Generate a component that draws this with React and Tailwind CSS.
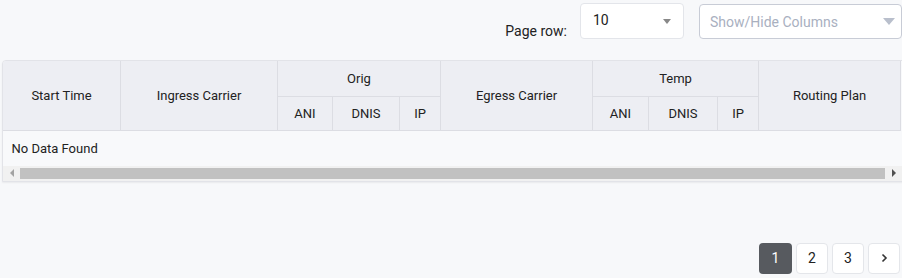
import React from "react";

const cols = [118, 157, 55, 67, 41, 152, 56, 69, 41, 142];

const Th = ({ children, className = "", ...rest }) => (
  <th
    {...rest}
    className={`border border-[#dcdde3] font-normal text-[13px] text-[#222] text-center align-middle ${className}`}
  >
    {children}
  </th>
);

const App = () => {
  return (
    <div className="w-[902px] h-[278px] bg-[#f7f8fa] overflow-hidden font-['Roboto',sans-serif] text-[#222]">
      {/* Top controls */}
      <div className="flex items-start justify-end pt-[3px] h-[57px]">
        <span className="text-[14px] mt-[18px] mr-[13px]">Page row:</span>
        <div className="w-[104px] h-[36px] bg-white border border-[#e3e5ea] rounded-[4px] flex items-center justify-between pl-[12px] pr-[12px]">
          <span className="text-[14px] -mt-[1px]">10</span>
          <span className="w-0 h-0 border-l-[4px] border-r-[4px] border-t-[5px] border-l-transparent border-r-transparent border-t-[#888]" />
        </div>
        <div className="ml-[15px] mt-[1px] w-[203px] h-[35px] bg-white border border-[#c8ccd6] rounded-[4px] flex items-center justify-between pl-[10px] pr-[6px]">
          <span className="text-[14px] text-[#a9b0bf] mt-[2px]">Show/Hide Columns</span>
          <span className="w-0 h-0 border-l-[6px] border-r-[6px] border-t-[7px] border-l-transparent border-r-transparent border-t-[#b9bfcc]" />
        </div>
      </div>

      {/* Table */}
      <div className="ml-[2px] mt-[3px] w-[902px] rounded-tl-[4px] border border-[#e2e3e8] bg-[#f8f9fb] overflow-hidden shadow-[0_1px_2px_rgba(0,0,0,0.06)]">
        <table className="border-collapse table-fixed w-[899px] -m-px">
          <colgroup>
            {cols.map((w, i) => (
              <col key={i} style={{ width: w }} />
            ))}
          </colgroup>
          <thead className="bg-[#edeef3]">
            <tr className="h-[36px]">
              <Th rowSpan={2}>Start Time</Th>
              <Th rowSpan={2}>Ingress Carrier</Th>
              <Th colSpan={3}>Orig</Th>
              <Th rowSpan={2}>Egress Carrier</Th>
              <Th colSpan={3}>Temp</Th>
              <Th rowSpan={2}>Routing Plan</Th>
            </tr>
            <tr className="h-[34px]">
              <Th>ANI</Th>
              <Th>DNIS</Th>
              <Th>IP</Th>
              <Th>ANI</Th>
              <Th>DNIS</Th>
              <Th>IP</Th>
            </tr>
          </thead>
          <tbody>
            <tr className="h-[36px]">
              <td colSpan={10} className="px-[9px] text-[13px] text-[#222]">
                No Data Found
              </td>
            </tr>
          </tbody>
        </table>
        {/* Scrollbar */}
        <div className="h-[15px] bg-[#f1f1f1] flex items-center">
          <div className="w-[17px] flex justify-center">
            <span className="w-0 h-0 border-t-[4px] border-b-[4px] border-r-[4px] border-t-transparent border-b-transparent border-r-[#a3a3a3]" />
          </div>
          <div className="h-[11px] w-[865px] bg-[#c1c1c1]" />
          <div className="w-[17px] flex justify-center">
            <span className="w-0 h-0 border-t-[4px] border-b-[4px] border-l-[4px] border-t-transparent border-b-transparent border-l-[#505050]" />
          </div>
        </div>
      </div>

      {/* Pagination */}
      <div className="flex justify-end gap-[4px] mt-[61px] pr-[2px]">
        <button className="w-[33px] h-[31px] rounded-[4px] bg-[#575a5f] text-white text-[14px]">1</button>
        <button className="w-[32px] h-[31px] rounded-[4px] bg-white border border-[#e4e6ea] text-[14px]">2</button>
        <button className="w-[32px] h-[31px] rounded-[4px] bg-white border border-[#e4e6ea] text-[14px]">3</button>
        <button className="w-[32px] h-[31px] rounded-[4px] bg-white border border-[#e4e6ea] flex items-center justify-center">
          <svg width="8" height="10" viewBox="0 0 8 10" fill="none" stroke="#333" strokeWidth="1.6">
            <path d="M2.5 1.5 L6 5 L2.5 8.5" />
          </svg>
        </button>
      </div>
    </div>
  );
};

export default App;
